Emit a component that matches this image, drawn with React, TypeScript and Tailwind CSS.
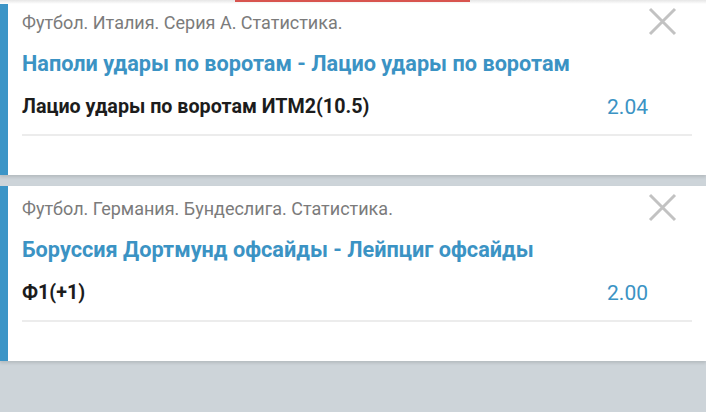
import React from 'react';

type Bet = {
  category: string;
  title: string;
  pick: string;
  odds: string;
};

const bets: Bet[] = [
  {
    category: 'Футбол. Италия. Серия А. Статистика.',
    title: 'Наполи удары по воротам - Лацио удары по воротам',
    pick: 'Лацио удары по воротам ИТМ2(10.5)',
    odds: '2.04',
  },
  {
    category: 'Футбол. Германия. Бундеслига. Статистика.',
    title: 'Боруссия Дортмунд офсайды - Лейпциг офсайды',
    pick: 'Ф1(+1)',
    odds: '2.00',
  },
];

function CloseIcon() {
  return (
    <svg width="29" height="29" viewBox="0 0 29 29" fill="none">
      <path d="M2 2 L27 27 M27 2 L2 27" stroke="#c2c2c2" strokeWidth="3" />
    </svg>
  );
}

function BetCard({ bet }: { bet: Bet }) {
  return (
    <div className="relative flex h-[175px] bg-white shadow-[0_2px_3px_rgba(0,0,0,0.12)]">
      <div className="w-[8px] bg-[#3c95c7]" />
      <div className="flex-1 px-[14px] pt-[11px]">
        <div className="text-[18px] leading-[24px] text-[#7b7b7b]">{bet.category}</div>
        <div className="mt-[15px] text-[21.7px] font-bold leading-[28px] text-[#3b93c4]">{bet.title}</div>
        <div className="mt-[15px] flex items-center justify-between leading-[28px]">
          <span className="text-[19.7px] font-bold text-[#1c1c1c]">{bet.pick}</span>
          <span className="mr-[44px] text-[21px] text-[#3b93c4]">{bet.odds}</span>
        </div>
        <div className="mt-[13px] h-[2px] bg-[#ececec]" />
      </div>
      <button className="absolute right-[29px] top-[7px]">
        <CloseIcon />
      </button>
    </div>
  );
}

export default function App() {
  return (
    <div className="relative flex h-[412px] w-[706px] flex-col gap-[11px] overflow-hidden bg-[#cdd4d9] font-['Roboto',sans-serif]">
      {bets.map((bet, i) => (
        <BetCard key={i} bet={bet} />
      ))}
      <div className="absolute left-0 right-0 top-0 h-[4px] bg-gradient-to-b from-[#e6e6e6] to-white" />
      <div className="absolute left-[235px] top-0 h-[2px] w-[235px] bg-[#d8544f]" />
    </div>
  );
}
